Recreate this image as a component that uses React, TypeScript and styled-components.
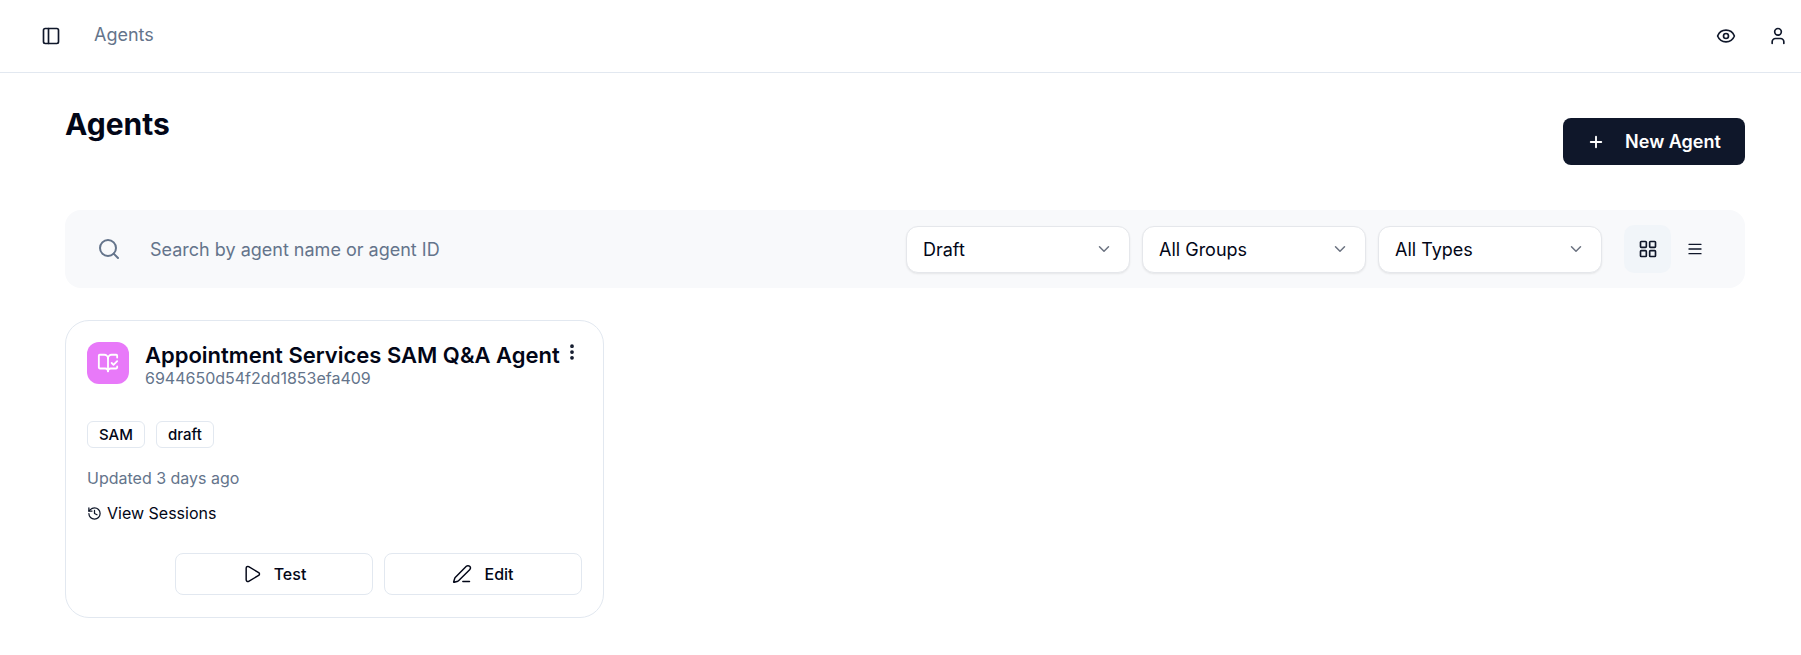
import { Eye, User, PanelLeft, Search, ChevronDown, LayoutGrid, AlignJustify, Plus, EllipsisVertical, History, Play, PenLine, BookOpenCheck } from "lucide-react";
import styled, { createGlobalStyle } from "styled-components";

const filters = ["Draft", "All Groups", "All Types"];

export default function App() {
  return (
    <>
      <GlobalStyle />
      <TopBar>
        <TopLeft>
          <PanelLeft size={20} strokeWidth={2} color="#0f172a" />
          <Crumb>Agents</Crumb>
        </TopLeft>
        <TopRight>
          <Eye size={20} strokeWidth={2} color="#0f172a" />
          <User size={20} strokeWidth={2} color="#0f172a" />
        </TopRight>
      </TopBar>
      <Main>
        <PageHead>
          <Title>Agents</Title>
          <NewButton>
            <Plus size={18} strokeWidth={2.5} />
            New Agent
          </NewButton>
        </PageHead>
        <Toolbar>
          <SearchIcon>
            <Search size={24} strokeWidth={2} color="#64748b" />
          </SearchIcon>
          <SearchText>Search by agent name or agent ID</SearchText>
          <Filters>
            {filters.map((f) => (
              <Select key={f}>
                {f}
                <ChevronDown size={18} strokeWidth={2} color="#6b7280" />
              </Select>
            ))}
          </Filters>
          <ViewToggle $active>
            <LayoutGrid size={20} strokeWidth={2} color="#0f172a" />
          </ViewToggle>
          <ViewToggle>
            <AlignJustify size={16} strokeWidth={2} color="#0f172a" />
          </ViewToggle>
        </Toolbar>
        <Card>
          <CardHead>
            <AgentIcon>
              <BookOpenCheck size={22} strokeWidth={2} color="#fff" />
            </AgentIcon>
            <CardTitles>
              <AgentName>Appointment Services SAM Q&amp;A Agent</AgentName>
              <AgentId>6944650d54f2dd1853efa409</AgentId>
            </CardTitles>
            <Kebab>
              <EllipsisVertical size={20} strokeWidth={2.5} color="#0f172a" />
            </Kebab>
          </CardHead>
          <Tags>
            <Tag>SAM</Tag>
            <Tag>draft</Tag>
          </Tags>
          <Updated>Updated 3 days ago</Updated>
          <Sessions>
            <History size={15} strokeWidth={2} color="#0f172a" />
            View Sessions
          </Sessions>
          <Actions>
            <ActionButton>
              <Play size={20} strokeWidth={1.75} />
              Test
            </ActionButton>
            <ActionButton>
              <PenLine size={20} strokeWidth={1.75} />
              Edit
            </ActionButton>
          </Actions>
        </Card>
      </Main>
    </>
  );
}

const GlobalStyle = createGlobalStyle`
  html, body { margin: 0; background: #fff; }
  body { font-family: Inter, "Noto Sans", sans-serif; color: #020617; }
  * { box-sizing: border-box; }
`;

const TopBar = styled.header`
  height: 73px;
  border-bottom: 1px solid #e2e8f0;
  display: flex;
  align-items: center;
  justify-content: space-between;
  padding: 0 13px 1px 41px;
`;
const TopLeft = styled.div`
  display: flex;
  align-items: center;
  gap: 33px;
`;
const Crumb = styled.span`
  font-size: 18px;
  color: #64748b;
  margin-top: -2px;
`;
const TopRight = styled.div`
  display: flex;
  align-items: center;
  gap: 32px;
`;
const Main = styled.main`
  padding: 0 56px 0 65px;
`;
const PageHead = styled.div`
  display: flex;
  justify-content: space-between;
  align-items: flex-start;
  height: 137px;
  padding-top: 33px;
`;
const Title = styled.h1`
  margin: 0;
  font-size: 30px;
  line-height: 36px;
  font-weight: 700;
`;
const NewButton = styled.button`
  margin-top: 12px;
  width: 182px;
  height: 47px;
  border: 0;
  border-radius: 8px;
  background: #0f172a;
  color: #fff;
  font: 600 18px Inter, sans-serif;
  display: flex;
  align-items: center;
  justify-content: center;
  gap: 20px;
`;
const Toolbar = styled.div`
  height: 78px;
  border-radius: 16px;
  background: #f8f9fb;
  display: flex;
  align-items: center;
  padding: 0 27px 0 32px;
`;
const SearchIcon = styled.span`
  display: flex;
  width: 53px;
`;
const SearchText = styled.span`
  flex: 1;
  font-size: 18px;
  color: #64748b;
`;
const Filters = styled.div`
  display: flex;
  gap: 12px;
  margin-right: 22px;
`;
const Select = styled.div`
  width: 224px;
  height: 47px;
  background: #fff;
  border: 1px solid #e5e7eb;
  border-radius: 12px;
  box-shadow: 0 1px 2px rgba(0, 0, 0, 0.08);
  display: flex;
  align-items: center;
  justify-content: space-between;
  padding: 0 16px;
  font-size: 18px;
`;
const ViewToggle = styled.div<{ $active?: boolean }>`
  width: 47px;
  height: 48px;
  border-radius: 10px;
  background: ${(p) => (p.$active ? "#f1f5f9" : "transparent")};
  display: flex;
  align-items: center;
  justify-content: center;
`;
const Card = styled.article`
  margin-top: 32px;
  width: 539px;
  height: 298px;
  border: 1px solid #e2e8f0;
  border-radius: 24px;
  padding: 21px 21px 0;
  display: flex;
  flex-direction: column;
`;
const CardHead = styled.div`
  display: flex;
  align-items: flex-start;
  height: 79px;
`;
const AgentIcon = styled.div`
  width: 42px;
  height: 42px;
  flex: none;
  border-radius: 12px;
  background: #e879f9;
  display: flex;
  align-items: center;
  justify-content: center;
`;
const CardTitles = styled.div`
  flex: 1;
  min-width: 0;
  margin-left: 16px;
`;
const AgentName = styled.div`
  font-size: 22px;
  font-weight: 600;
  line-height: 26px;
  white-space: nowrap;
`;
const AgentId = styled.div`
  font-size: 16px;
  line-height: 20px;
  color: #64748b;
`;
const Kebab = styled.span`
  display: flex;
  margin: 0 0 0 -10px;
`;
const Tags = styled.div`
  display: flex;
  gap: 11px;
`;
const Tag = styled.span`
  height: 27px;
  padding: 0 11px;
  border: 1px solid #e2e8f0;
  border-radius: 6px;
  font-size: 15px;
  font-weight: 500;
  display: flex;
  align-items: center;
`;
const Updated = styled.div`
  margin-top: 20px;
  font-size: 16px;
  line-height: 20px;
  color: #64748b;
`;
const Sessions = styled.div`
  margin-top: 15px;
  display: flex;
  align-items: center;
  gap: 5px;
  font-size: 16px;
  line-height: 20px;
`;
const Actions = styled.div`
  margin-top: 30px;
  display: flex;
  justify-content: flex-end;
  gap: 11px;
`;
const ActionButton = styled.button`
  width: 198px;
  height: 42px;
  background: #fff;
  border: 1px solid #e2e8f0;
  border-radius: 8px;
  color: #020617;
  font: 500 16px Inter, sans-serif;
  display: flex;
  align-items: center;
  justify-content: center;
  gap: 12px;
`;
